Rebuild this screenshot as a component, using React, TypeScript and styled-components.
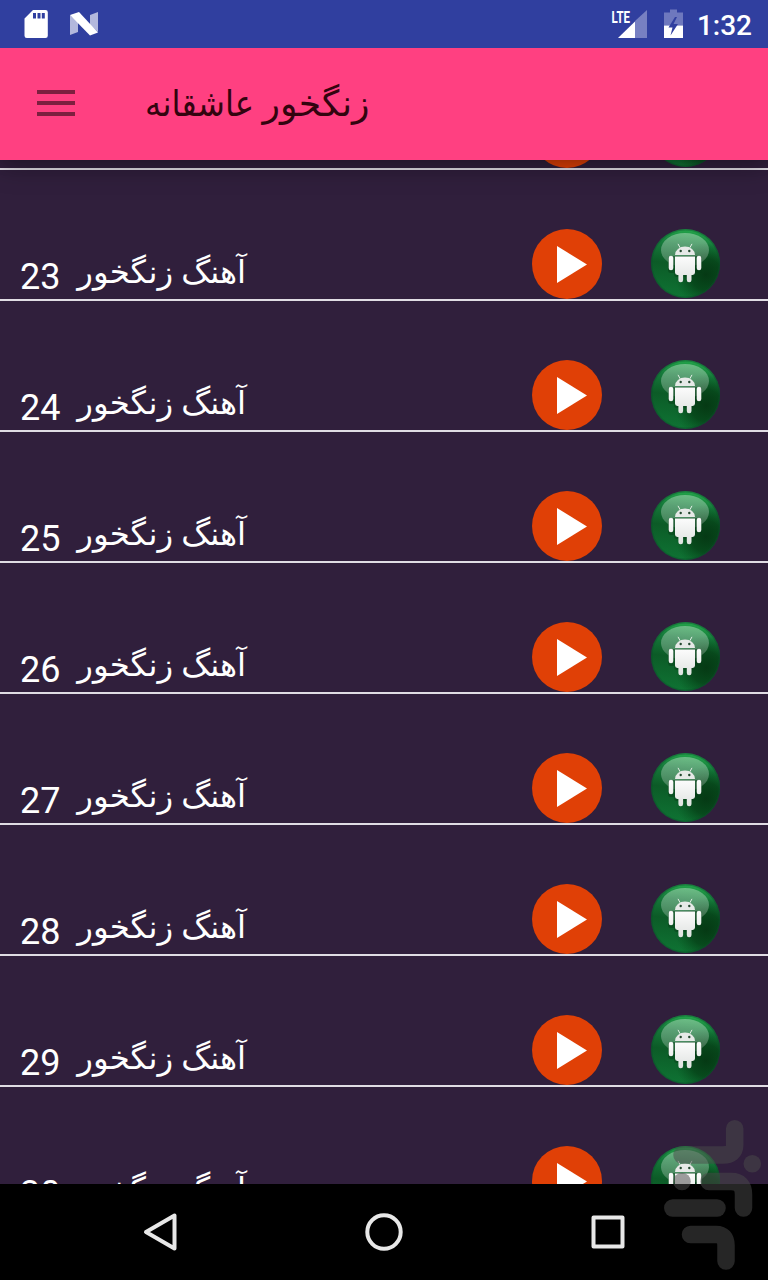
import React from "react";
import styled, { createGlobalStyle } from "styled-components";

const GlobalStyle = createGlobalStyle`
  * { box-sizing: border-box; }
  body { margin: 0; background: #301f3c; }
`;

const Screen = styled.div`
  position: relative;
  display: flex;
  flex-direction: column;
  width: 768px;
  height: 1280px;
  overflow: hidden;
  background: #301f3c;
  font-family: Roboto, "Noto Sans", "DejaVu Sans", sans-serif;
`;

const StatusBar = styled.header`
  position: relative;
  z-index: 2;
  display: flex;
  flex: none;
  align-items: center;
  height: 48px;
  padding: 0 16px 0 24px;
  background: #303f9f;
`;

const StatusIcon = styled.svg<{ $gap: number }>`
  flex: none;
  display: block;
  margin-right: ${(p) => p.$gap}px;
`;

const Spacer = styled.div`
  flex: 1;
`;

const Clock = styled.time`
  color: #fff;
  font-size: 28px;
  font-weight: 500;
  line-height: 48px;
  padding-top: 4px;
`;

const Toolbar = styled.div`
  position: relative;
  z-index: 1;
  display: flex;
  flex: none;
  align-items: center;
  height: 112px;
  padding-left: 37px;
  background: #ff4081;
  box-shadow: 0 8px 24px rgba(0, 0, 0, 0.26), 0 0 16px rgba(0, 0, 0, 0.18);
`;

const MenuButton = styled.button`
  display: flex;
  flex-direction: column;
  gap: 7px;
  width: 38px;
  padding: 0;
  border: 0;
  background: none;
  transform: translateY(-1px);
`;

const MenuLine = styled.span`
  height: 4px;
  background: #7d1f3f;
`;

const Title = styled.h1`
  display: flex;
  gap: 9px;
  width: 236px;
  margin: 0 0 0 59px;
  color: #33040f;
  font-size: 36px;
  font-weight: 400;
  line-height: 48px;
  white-space: nowrap;
`;

const TitleWord = styled.span<{ $stretch: number }>`
  transform: scaleX(${(p) => p.$stretch});
  transform-origin: right center;
`;

const List = styled.main`
  flex: 1;
  min-height: 0;
  overflow: hidden;
`;

const Rows = styled.ul`
  margin: -121px 0 0;
  padding: 0;
  list-style: none;
`;

const Row = styled.li`
  display: flex;
  align-items: flex-end;
  height: 131px;
  padding: 0 48px 0 20px;
  border-bottom: 2px solid #e0dde4;
  color: #fff;
`;

const Number = styled.span`
  width: 53px;
  font-size: 36px;
  line-height: 42px;
  padding-bottom: 1px;
`;

const Name = styled.span`
  width: 173px;
  font-size: 32px;
  line-height: 42px;
  padding-bottom: 6px;
  white-space: nowrap;
  transform: scaleX(1.012);
  transform-origin: right center;
`;

const RowIcon = styled.svg<{ $left: string }>`
  display: block;
  flex: none;
  margin-left: ${(p) => p.$left};
`;

const NavBar = styled.nav`
  display: flex;
  flex: none;
  align-items: center;
  justify-content: center;
  gap: 176px;
  height: 96px;
  background: #000;
`;

const NavIcon = styled.svg`
  display: block;
  fill: none;
  stroke: #e8e8e8;
  stroke-width: 4;
  stroke-linejoin: round;
`;

const Watermark = styled.svg`
  position: absolute;
  z-index: 2;
  left: 660px;
  top: 1116px;
`;

const PlayIcon = () => (
  <RowIcon $left="auto" width="70" height="70" viewBox="0 0 70 70">
    <circle cx="35" cy="35" r="35" fill="#e04006" />
    <path d="M25 17v37l30-18.500z" fill="#fff" />
  </RowIcon>
);

const AndroidIcon = () => (
  <RowIcon $left="48px" width="70" height="70" viewBox="0 0 70 70">
    <circle cx="35.500" cy="34.500" r="34.500" fill="url(#ball)" />
    <circle cx="35.500" cy="34.500" r="34.500" fill="url(#shade)" />
    <circle cx="35.500" cy="34.500" r="33.800" fill="none" stroke="#0d4a2c" strokeOpacity=".4" strokeWidth="1.400" />
    <ellipse cx="35" cy="21" rx="24" ry="17" fill="url(#gloss)" />
    <g fill="#063d17" opacity=".45" transform="translate(0 1)">
      <rect x="18" y="26" width="34" height="17" rx="3" />
      <rect x="24" y="26" width="22" height="21" rx="3" />
    </g>
    <g fill="url(#robot)">
      <path d="M25 26a10 8.500 0 0 1 20 0z" />
      <path d="M25 27.400h20v16.100a2.400 2.400 0 0 1-2.400 2.400H27.400a2.400 2.400 0 0 1-2.400-2.400z" />
      <rect x="18.700" y="26.800" width="4.600" height="14.400" rx="2.300" />
      <rect x="46.700" y="26.800" width="4.600" height="14.400" rx="2.300" />
      <rect x="28.400" y="40" width="4.700" height="13.200" rx="2.200" />
      <rect x="36.800" y="40" width="4.700" height="13.200" rx="2.200" />
    </g>
    <path d="M30 18.500l-1.800-3.300M40 18.500l1.800-3.300" stroke="#e4eee6" strokeWidth="1" strokeLinecap="round" />
    <circle cx="30.700" cy="22" r="1.200" fill="#23472f" />
    <circle cx="39.300" cy="22" r="1.200" fill="#23472f" />
  </RowIcon>
);

const Gradients = () => (
  <svg width="0" height="0" style={{ position: "absolute" }}>
    <defs>
      <linearGradient id="ball" x1=".4" y1="0" x2=".3" y2="1">
        <stop offset="0" stopColor="#22a349" />
        <stop offset=".22" stopColor="#15793a" />
        <stop offset=".5" stopColor="#0c5b27" />
        <stop offset="1" stopColor="#0f7434" />
      </linearGradient>
      <radialGradient id="shade" cx=".8" cy=".66" r=".46">
        <stop offset="0" stopColor="#053713" stopOpacity=".95" />
        <stop offset=".5" stopColor="#053f16" stopOpacity=".75" />
        <stop offset="1" stopColor="#06501e" stopOpacity="0" />
      </radialGradient>
      <linearGradient id="gloss" x1="0" y1="0" x2="0" y2="1">
        <stop offset="0" stopColor="#fff" stopOpacity=".34" />
        <stop offset="1" stopColor="#fff" stopOpacity=".2" />
      </linearGradient>
      <linearGradient id="robot" x1="0" y1="16" x2="0" y2="54" gradientUnits="userSpaceOnUse">
        <stop offset="0" stopColor="#e6e9e7" />
        <stop offset=".28" stopColor="#e6e9e7" />
        <stop offset=".32" stopColor="#fbfbfb" />
        <stop offset="1" stopColor="#dfe2e0" />
      </linearGradient>
    </defs>
  </svg>
);

const songs = [22, 23, 24, 25, 26, 27, 28, 29, 30];

export default function App() {
  return (
    <Screen>
      <GlobalStyle />
      <Gradients />
      <StatusBar>
        <StatusIcon $gap={22} width="24" height="30" viewBox="0 0 24 30">
          <path fillRule="evenodd" fill="#fff" d="M9 1h12.500a2.300 2.300 0 0 1 2.300 2.300v23.400a2.300 2.300 0 0 1-2.300 2.300H2.800a2.300 2.300 0 0 1-2.300-2.300V9.500zM9 4v5.500h3V4zm4.500 0v5.500h3V4zm4.300 0v5.500h3V4z" />
        </StatusIcon>
        <StatusIcon $gap={0} width="29" height="26" viewBox="0 0 29 26">
          <path fill="#b3b8dd" d="M0 4l8 7v10L0 24zM20 4l8-3v20l-8-7z" />
          <path fill="#fff" d="M0 4l9-3 19 20.500-8 3z" />
        </StatusIcon>
        <Spacer />
        <StatusIcon $gap={16} width="37" height="32" viewBox="0 0 37 32">
          <path fill="#7780c2" d="M36 2v28H24V13z" />
          <path fill="#fff" d="M24 13.500V30H7z" />
          <text x="0.500" y="14.500" fill="#fff" fontFamily="Roboto" fontWeight="700" fontSize="16.500" textLength="18.500" lengthAdjust="spacingAndGlyphs">LTE</text>
        </StatusIcon>
        <StatusIcon $gap={13} width="20" height="30" viewBox="0 0 20 30">
          <path fill="#6e78be" d="M6 0.500h7v3h6v13H0v-13h6z" />
          <path fill="#fff" d="M0 16.500h19V29H0z" />
          <path fill="#303f9f" d="M11 8L4.500 18.500H8.500L6.500 26.500 14 15h-4.500L13 8z" />
        </StatusIcon>
        <Clock>1:32</Clock>
      </StatusBar>
      <Toolbar>
        <MenuButton aria-label="menu">
          <MenuLine />
          <MenuLine />
          <MenuLine />
        </MenuButton>
        <Title dir="rtl">
          <TitleWord $stretch={1.005}>زنگخور</TitleWord>
          <TitleWord $stretch={0.9}>عاشقانه</TitleWord>
        </Title>
      </Toolbar>
      <List>
        <Rows>
          {songs.map((n) => (
            <Row key={n}>
              <Number>{n}</Number>
              <Name dir="rtl">آهنگ زنگخور</Name>
              <PlayIcon />
              <AndroidIcon />
            </Row>
          ))}
        </Rows>
      </List>
      <NavBar>
        <NavIcon width="48" height="48" viewBox="0 0 48 48">
          <path d="M38.500 7.500v33L10 24z" />
        </NavIcon>
        <NavIcon width="48" height="48" viewBox="0 0 48 48">
          <circle cx="24" cy="24" r="16.700" />
        </NavIcon>
        <NavIcon width="48" height="48" viewBox="0 0 48 48">
          <rect x="9.500" y="9.500" width="29" height="29" />
        </NavIcon>
      </NavBar>
      <Watermark width="108" height="164" viewBox="0 0 108 164" opacity=".52">
        <g fill="none" stroke="#4a4a4a" strokeWidth="17.500" strokeLinecap="round" strokeLinejoin="round">
          <path d="M74.700 12.700V29q0 10-12 10H22" />
          <path d="M49 65.500H71q12.500 0 12.500 13V92" />
          <path d="M12.800 92H57" />
          <path d="M30.500 118.500H56q10 0 10 11V145" />
        </g>
        <circle cx="92.300" cy="47.700" r="8.800" fill="#4a4a4a" />
        <circle cx="22" cy="65.500" r="8.800" fill="#4a4a4a" />
      </Watermark>
    </Screen>
  );
}
